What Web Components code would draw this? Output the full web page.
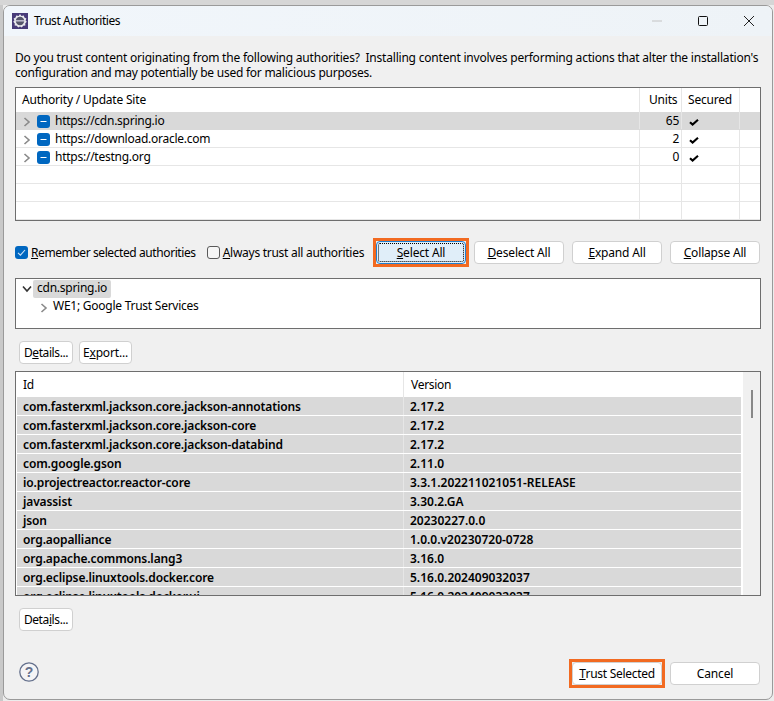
<!DOCTYPE html>
<html>
<head>
<meta charset="utf-8">
<title>Trust Authorities</title>
<style>
  html, body { margin: 0; height: 100%; overflow: hidden; }
  body {
    background:
      linear-gradient(#d6d6d6, #d6d6d6) 0 0 / 100% 5px no-repeat,
      linear-gradient(#c9c9c9, #c9c9c9) 0 0 / 3px 100% no-repeat,
      #ececec;
    font: 12px "Noto Sans", sans-serif;
    letter-spacing: -.25px;
    color: #000;
  }
  trust-dialog p { white-space: nowrap; }
  trust-dialog p span { letter-spacing: -.21px; }
</style>
</head>
<body>
<trust-dialog>
  <p slot="message"><span>Do you trust content originating from the following authorities?&nbsp; Installing content involves performing actions that alter the installation's</span><br>configuration and may potentially be used for malicious purposes.</p>
  <authority-table slot="authorities"></authority-table>
  <check-box slot="options" checked><u>R</u>emember selected authorities</check-box>
  <check-box slot="options" style="letter-spacing:-.27px"><u>A</u>lways trust all authorities</check-box>
  <dialog-button slot="actions" width="90" focused marked><u>S</u>elect All</dialog-button>
  <dialog-button slot="actions" width="90"><u>D</u>eselect All</dialog-button>
  <dialog-button slot="actions" width="90"><u>E</u>xpand All</dialog-button>
  <dialog-button slot="actions" width="90"><u>C</u>ollapse All</dialog-button>
  <cert-tree slot="tree"></cert-tree>
  <dialog-button slot="cert-actions" width="54" style="letter-spacing:-.4px">D<u>e</u>tails...</dialog-button>
  <dialog-button slot="cert-actions" width="53">E<u>x</u>port...</dialog-button>
  <unit-table slot="units"></unit-table>
  <dialog-button slot="unit-actions" width="54" style="letter-spacing:-.4px">Deta<u>i</u>ls...</dialog-button>
  <dialog-button slot="footer" width="90" marked style="letter-spacing:-.29px"><u>T</u>rust Selected</dialog-button>
  <dialog-button slot="footer" width="90">Cancel</dialog-button>
</trust-dialog>

<script>
const chevronRight = `<svg width="8" height="10" viewBox="0 0 8 10"><path d="M1.5 1 L6 5 L1.5 9" fill="none" stroke="#8a8a8a" stroke-width="1.6"/></svg>`;
const chevronDown = `<svg width="10" height="8" viewBox="0 0 10 8"><path d="M1 1.5 L5 6 L9 1.5" fill="none" stroke="#333" stroke-width="1.6"/></svg>`;
const tristate = `<svg width="13" height="13" viewBox="0 0 13 13"><rect width="13" height="13" rx="3" fill="#0067c0"/><path d="M3.5 6.5 H9.5" stroke="#fff" stroke-width="1.2"/></svg>`;
const tick = `<svg width="10" height="7" viewBox="0 0 10 7"><path d="M1 3.2 L3.6 5.6 L9 .8" fill="none" stroke="#000" stroke-width="2.1"/></svg>`;

class DialogButton extends HTMLElement {
  constructor() {
    super();
    this.attachShadow({ mode: 'open' });
  }

  connectedCallback() {
    const width = this.getAttribute('width') || 90;
    this.shadowRoot.innerHTML = `
      <style>
        :host {
          display: block;
          width: ${width}px;
          height: 23px;
          box-sizing: border-box;
          letter-spacing: -.17px;
        }
        .btn {
          height: 100%;
          box-sizing: border-box;
          display: flex;
          align-items: center;
          justify-content: center;
          background: #fff;
          border: 1px solid #d0d0d0;
          border-radius: 4px;
          padding-bottom: 1px;
          white-space: nowrap;
        }
        :host([focused]) .btn {
          background: #e0eef9;
          border-color: #1f7fd0;
          position: relative;
        }
        :host([focused]) .btn::after {
          content: "";
          position: absolute;
          inset: 1px;
          border: 1px dotted #000;
          border-radius: 2px;
        }
        :host([marked]) {
          outline: 3px solid #f26a21;
        }
      </style>
      <div class="btn"><slot></slot></div>
    `;
  }
}

class CheckBox extends HTMLElement {
  constructor() {
    super();
    this.attachShadow({ mode: 'open' });
  }

  connectedCallback() {
    const box = this.hasAttribute('checked')
      ? `<svg width="13" height="13" viewBox="0 0 13 13"><rect width="13" height="13" rx="3" fill="#0067c0"/><path d="M3 6.8 L5.4 9.2 L10 4" fill="none" stroke="#cfe3f5" stroke-width="1.1"/></svg>`
      : `<svg width="13" height="13" viewBox="0 0 13 13"><rect x=".5" y=".5" width="12" height="12" rx="2.5" fill="#f6f6f6" stroke="#5a5a5a"/></svg>`;
    this.shadowRoot.innerHTML = `
      <style>
        :host { display: flex; align-items: center; gap: 3px; white-space: nowrap; letter-spacing: -.41px; }
        svg { display: block; }
      </style>
      ${box}<span><slot></slot></span>
    `;
  }
}

class AuthorityTable extends HTMLElement {
  constructor() {
    super();
    this.attachShadow({ mode: 'open' });
    this.rows = [
      ['https://cdn.spring.io', '65', true],
      ['https://download.oracle.com', '2', true],
      ['https://testng.org', '0', true],
      ['', '', false],
      ['', '', false],
      ['', '', false],
    ];
  }

  connectedCallback() {
    const rowsHtml = this.rows.map((r, i) => `
      <div class="row ${i === 0 ? 'sel' : ''}">
        <div class="c c1">${r[0] ? `<span class="chev">${chevronRight}</span><span class="tri">${tristate}</span><span>${r[0]}</span>` : ''}</div>
        <div class="c c2">${r[1]}</div>
        <div class="c c3">${r[2] ? tick : ''}</div>
        <div class="c c4"></div>
      </div>`).join('');
    this.shadowRoot.innerHTML = `
      <style>
        :host { display: block; border: 1px solid #6e6e6e; background: #fff; height: 134px; box-sizing: border-box; overflow: hidden; }
        .row { display: grid; grid-template-columns: 624px 42px 58px 1fr; height: 18px; box-sizing: border-box; border-bottom: 1px solid #e6e6e6; }
        .row.head { height: 24px; border-bottom: 0; letter-spacing: -.2px; }
        .row.sel { background: #d9d9d9; border-bottom-color: #d9d9d9; }
        .c { border-right: 1px solid #e6e6e6; display: flex; align-items: center; box-sizing: border-box; white-space: nowrap; overflow: hidden; }
        .row.head .c { padding-bottom: 1px; }
        .head .c1 { padding-left: 6px; }
        .head .c2 { padding-left: 9px; }
        .head .c3 { padding-left: 6px; }
        .row:not(.head) .c1 { padding-left: 7px; padding-bottom: 1px; }
        .row:not(.head) .c2 { justify-content: flex-end; padding-right: 2px; padding-bottom: 1px; }
        .row:not(.head) .c3 { padding-left: 7px; }
        .c3 svg { margin-top: 3px; }
        .c4 { border-right: 0; }
        .chev { display: flex; width: 14px; margin-top: 4px; }
        .tri { display: flex; margin-right: 5px; margin-top: 2px; }
        svg { display: block; }
      </style>
      <div class="row head">
        <div class="c c1">Authority / Update Site</div>
        <div class="c c2">Units</div>
        <div class="c c3">Secured</div>
        <div class="c c4"></div>
      </div>
      ${rowsHtml}
    `;
  }
}

class CertTree extends HTMLElement {
  constructor() {
    super();
    this.attachShadow({ mode: 'open' });
  }

  connectedCallback() {
    this.shadowRoot.innerHTML = `
      <style>
        :host { display: block; border: 1px solid #6e6e6e; background: #fff; height: 51px; box-sizing: border-box; padding-top: 1px; }
        .node { display: flex; align-items: center; height: 18px; white-space: nowrap; }
        .root { padding-left: 6px; }
        .root .arrow { width: 11px; display: flex; }
        .label { background: #d9d9d9; padding: 0 4px 1px; height: 17px; line-height: 16px; border-radius: 2px; }
        .child { padding: 0 0 3px 24px; box-sizing: border-box; }
        .child .arrow { width: 13px; display: flex; margin-top: 4px; }
        svg { display: block; }
      </style>
      <div class="node root"><span class="arrow">${chevronDown}</span><span class="label">cdn.spring.io</span></div>
      <div class="node child"><span class="arrow">${chevronRight}</span><span>WE1; Google Trust Services</span></div>
    `;
  }
}

class UnitTable extends HTMLElement {
  constructor() {
    super();
    this.attachShadow({ mode: 'open' });
    this.rows = [
      ['com.fasterxml.jackson.core.jackson-annotations', '2.17.2'],
      ['com.fasterxml.jackson.core.jackson-core', '2.17.2'],
      ['com.fasterxml.jackson.core.jackson-databind', '2.17.2'],
      ['com.google.gson', '2.11.0'],
      ['io.projectreactor.reactor-core', '3.3.1.202211021051-RELEASE'],
      ['javassist', '3.30.2.GA'],
      ['json', '20230227.0.0'],
      ['org.aopalliance', '1.0.0.v20230720-0728'],
      ['org.apache.commons.lang3', '3.16.0'],
      ['org.eclipse.linuxtools.docker.core', '5.16.0.202409032037'],
      ['org.eclipse.linuxtools.docker.ui', '5.16.0.202409032037'],
    ];
  }

  connectedCallback() {
    const rowsHtml = this.rows.map(r => `
      <div class="row"><div class="c a">${r[0]}</div><div class="c b">${r[1]}</div></div>`).join('');
    this.shadowRoot.innerHTML = `
      <style>
        :host { display: flex; border: 1px solid #6e6e6e; background: #fff; height: 225px; box-sizing: border-box; overflow: hidden; }
        .list { width: 725px; padding-left: 1px; box-sizing: border-box; overflow: hidden; flex: none; }
        .head { display: grid; grid-template-columns: 388px 1fr; height: 25px; margin-left: -1px; }
        .head div { display: flex; align-items: center; padding-left: 7px; padding-bottom: 1px; box-sizing: border-box; letter-spacing: -.3px; }
        .head div:first-child { border-right: 1px solid #e6e6e6; }
        .row { display: grid; grid-template-columns: 387px 1fr; height: 18px; margin-bottom: 1px; background: #d9d9d9; font-weight: 600; }
        .c { display: flex; align-items: center; padding-left: 6px; padding-top: 1px; box-sizing: border-box; white-space: nowrap; overflow: hidden; }
        .a { border-right: 1px solid #e6e6e6; letter-spacing: -.12px; }
        .b { letter-spacing: 0; }
        .bar { flex: 1; background: #f0f0f0; margin-left: 2px; display: flex; justify-content: center; padding-top: 18px; box-sizing: border-box; }
        .thumb { width: 2px; height: 28px; background: #888; }
      </style>
      <div class="list">
        <div class="head"><div>Id</div><div>Version</div></div>
        ${rowsHtml}
      </div>
      <div class="bar"><div class="thumb"></div></div>
    `;
  }
}

class TrustDialog extends HTMLElement {
  constructor() {
    super();
    this.attachShadow({ mode: 'open' });
  }

  connectedCallback() {
    this.shadowRoot.innerHTML = `
      <style>
        :host {
          display: flex;
          flex-direction: column;
          box-sizing: border-box;
          width: 770px;
          height: 695px;
          margin: 5px 0 0 3px;
          background: #f0f0f0;
          border: 1px solid #9a9a9a;
          border-radius: 7px;
          overflow: hidden;
        }
        .title {
          height: 30px;
          flex: none;
          display: flex;
          align-items: center;
          background: linear-gradient(90deg, #f1f6fb, #eef3f7);
          padding-left: 8px;
        }
        .title .logo { display: block; margin-right: 6px; }
        .title .name { flex: 1; padding-bottom: 1px; letter-spacing: -.45px; }
        .win { width: 46px; height: 30px; display: flex; align-items: center; justify-content: center; }
        .body { flex: 1; display: flex; flex-direction: column; padding: 14px 11px 0; width: 768px; box-sizing: border-box; }
        ::slotted(p) { margin: 0; line-height: 15px; width: 746px; }
        .message { height: 37px; flex: none; }
        .opts { display: flex; align-items: center; height: 23px; margin-top: 20px; }
        .checks { display: flex; gap: 11px; }
        .actions { display: flex; gap: 8px; margin-left: auto; margin-right: 1px; }
        .tree { margin-top: 14px; }
        .certs { display: flex; gap: 6px; margin: 12px 0 0 4px; }
        .units { margin-top: 7px; }
        .unit-act { margin: 12px 0 0 4px; }
        .foot { display: flex; align-items: center; margin-top: 31px; }
        .help { display: block; margin: -3px 0 0 4px; }
        .foot-btns { display: flex; gap: 8px; margin-left: auto; margin-right: 1px; }
      </style>
      <div class="title">
        <svg class="logo" width="16" height="16" viewBox="0 0 16 16">
          <rect width="16" height="16" fill="#473a78"/>
          <path d="M8 1 L9.4 3 L11.8 2.4 L12.4 4.6 L14.4 5.4 L13.6 7.4 L14.8 8.8 L13.2 10.4 L13.4 12.6 L11.2 12.8 L9.8 14.6 L8 13.6 L6.2 14.6 L4.8 12.8 L2.6 12.6 L2.8 10.4 L1.2 8.8 L2.4 7.4 L1.6 5.4 L3.6 4.6 L4.2 2.4 L6.6 3 Z" fill="#e8e8ec"/>
          <circle cx="8" cy="8" r="4.2" fill="#55556a"/>
          <rect x="4" y="7" width="8" height="1.6" fill="#b8b6c8"/>
        </svg>
        <span class="name">Trust Authorities</span>
        <div class="win"><svg width="10" height="2" viewBox="0 0 10 2"><path d="M0 1 H10" stroke="#c4c4c4"/></svg></div>
        <div class="win"><svg width="10" height="10" viewBox="0 0 10 10"><rect x=".5" y=".5" width="9" height="9" rx="1" fill="none" stroke="#111"/></svg></div>
        <div class="win"><svg width="10" height="10" viewBox="0 0 10 10"><path d="M0 0 L10 10 M10 0 L0 10" stroke="#222"/></svg></div>
      </div>
      <div class="body">
        <div class="message"><slot name="message"></slot></div>
        <slot name="authorities"></slot>
        <div class="opts">
          <div class="checks"><slot name="options"></slot></div>
          <div class="actions"><slot name="actions"></slot></div>
        </div>
        <div class="tree"><slot name="tree"></slot></div>
        <div class="certs"><slot name="cert-actions"></slot></div>
        <div class="units"><slot name="units"></slot></div>
        <div class="unit-act"><slot name="unit-actions"></slot></div>
        <div class="foot">
          <svg class="help" width="20" height="20" viewBox="0 0 20 20">
            <circle cx="10" cy="10" r="9.2" fill="#f4f4f6" stroke="#64708c" stroke-width="1.3"/>
            <text x="10" y="15" text-anchor="middle" font-family="Liberation Sans, sans-serif" font-size="14" font-weight="700" fill="#64708c">?</text>
          </svg>
          <div class="foot-btns"><slot name="footer"></slot></div>
        </div>
      </div>
    `;
  }
}

customElements.define('dialog-button', DialogButton);
customElements.define('check-box', CheckBox);
customElements.define('authority-table', AuthorityTable);
customElements.define('cert-tree', CertTree);
customElements.define('unit-table', UnitTable);
customElements.define('trust-dialog', TrustDialog);
</script>
</body>
</html>
